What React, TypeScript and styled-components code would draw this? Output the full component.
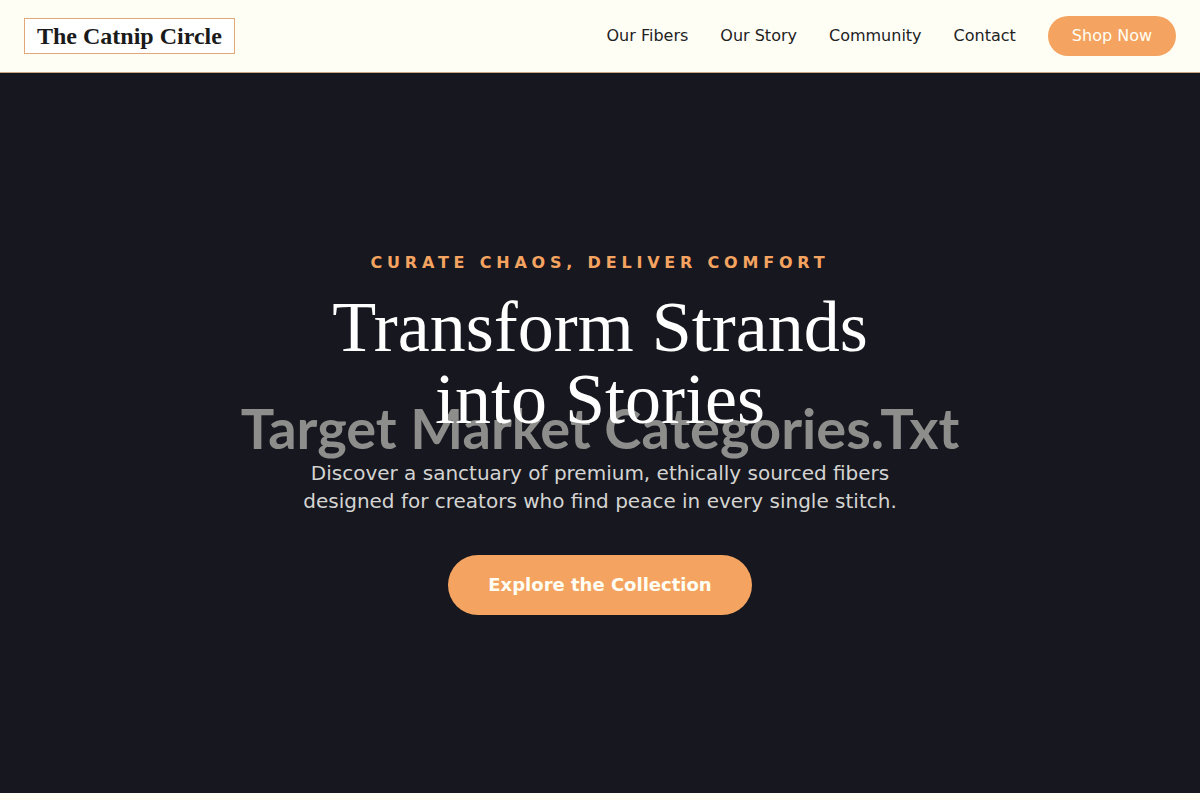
import React from "react";
import styled, { createGlobalStyle } from "styled-components";

const Global = createGlobalStyle`
  *, *::before, *::after { box-sizing: border-box; }
  body {
    margin: 0;
    background: #fffef5;
    color: #22221f;
    font-family: "DejaVu Sans", sans-serif;
    font-size: 16px;
    line-height: 24px;
  }
`;

const Header = styled.header`
  display: flex;
  align-items: center;
  justify-content: space-between;
  padding: 16px 24px;
  background: #fffef5;
  border-bottom: 1px solid #c9a583;
`;

const Brand = styled.a`
  padding: 0 12px;
  border: 1px solid #e2a878;
  background: #fff;
  color: #1a1a1a;
  font: bold 24px/34px "Liberation Serif", serif;
  text-decoration: none;
`;

const Nav = styled.nav`
  display: flex;
  align-items: center;
  gap: 32px;
`;

const NavLink = styled.a`
  color: inherit;
  text-decoration: none;
`;

const Button = styled.button<{ $large?: boolean }>`
  padding: ${(p) => (p.$large ? "16px 40px" : "8px 24px")};
  border: 0;
  border-radius: 30px;
  background: #f4a460;
  color: #fffef5;
  font-family: inherit;
  font-size: ${(p) => (p.$large ? 18 : 16)}px;
  font-weight: ${(p) => (p.$large ? 700 : 400)};
  line-height: ${(p) => (p.$large ? 28 : 24)}px;
  cursor: pointer;
`;

const Hero = styled.section`
  position: relative;
  display: flex;
  align-items: center;
  justify-content: center;
  min-height: 90vh;
  padding: 24px;
  background: #17171f;
  text-align: center;
`;

const Backdrop = styled.div`
  position: absolute;
  inset: 0;
  display: flex;
  align-items: center;
  justify-content: center;
  padding-bottom: 10px;
  color: #8d8d8b;
  font: bold 56px/64px Lato, sans-serif;
`;

const Content = styled.div`
  position: relative;
  display: flex;
  flex-direction: column;
  align-items: center;
`;

const Eyebrow = styled.p`
  margin: 0 0 16px;
  color: #f4a460;
  font-weight: 700;
  letter-spacing: 0.3em;
  text-transform: uppercase;
`;

const Title = styled.h1`
  max-width: 640px;
  margin: 0 0 24px;
  color: #fff;
  font: 400 72px/72px "Liberation Serif", serif;
`;

const Lead = styled.p`
  max-width: 640px;
  margin: 0 0 40px;
  color: #d4d4d2;
  font-size: 20px;
  line-height: 28px;
`;

const NextSection = styled.section`
  min-height: 10px;
  background: #fffef5;
`;

const links = ["Our Fibers", "Our Story", "Community", "Contact"];

export default function App() {
  return (
    <>
      <Global />
      <Header>
        <Brand href="#">The Catnip Circle</Brand>
        <Nav>
          {links.map((label) => (
            <NavLink key={label} href="#">{label}</NavLink>
          ))}
          <Button type="button">Shop Now</Button>
        </Nav>
      </Header>
      <main>
        <Hero>
          <Backdrop>Target Market Categories.Txt</Backdrop>
          <Content>
            <Eyebrow>Curate Chaos, Deliver Comfort</Eyebrow>
            <Title>Transform Strands into Stories</Title>
            <Lead>
              Discover a sanctuary of premium, ethically sourced fibers designed
              for creators who find peace in every single stitch.
            </Lead>
            <Button type="button" $large>Explore the Collection</Button>
          </Content>
        </Hero>
        <NextSection />
      </main>
    </>
  );
}
